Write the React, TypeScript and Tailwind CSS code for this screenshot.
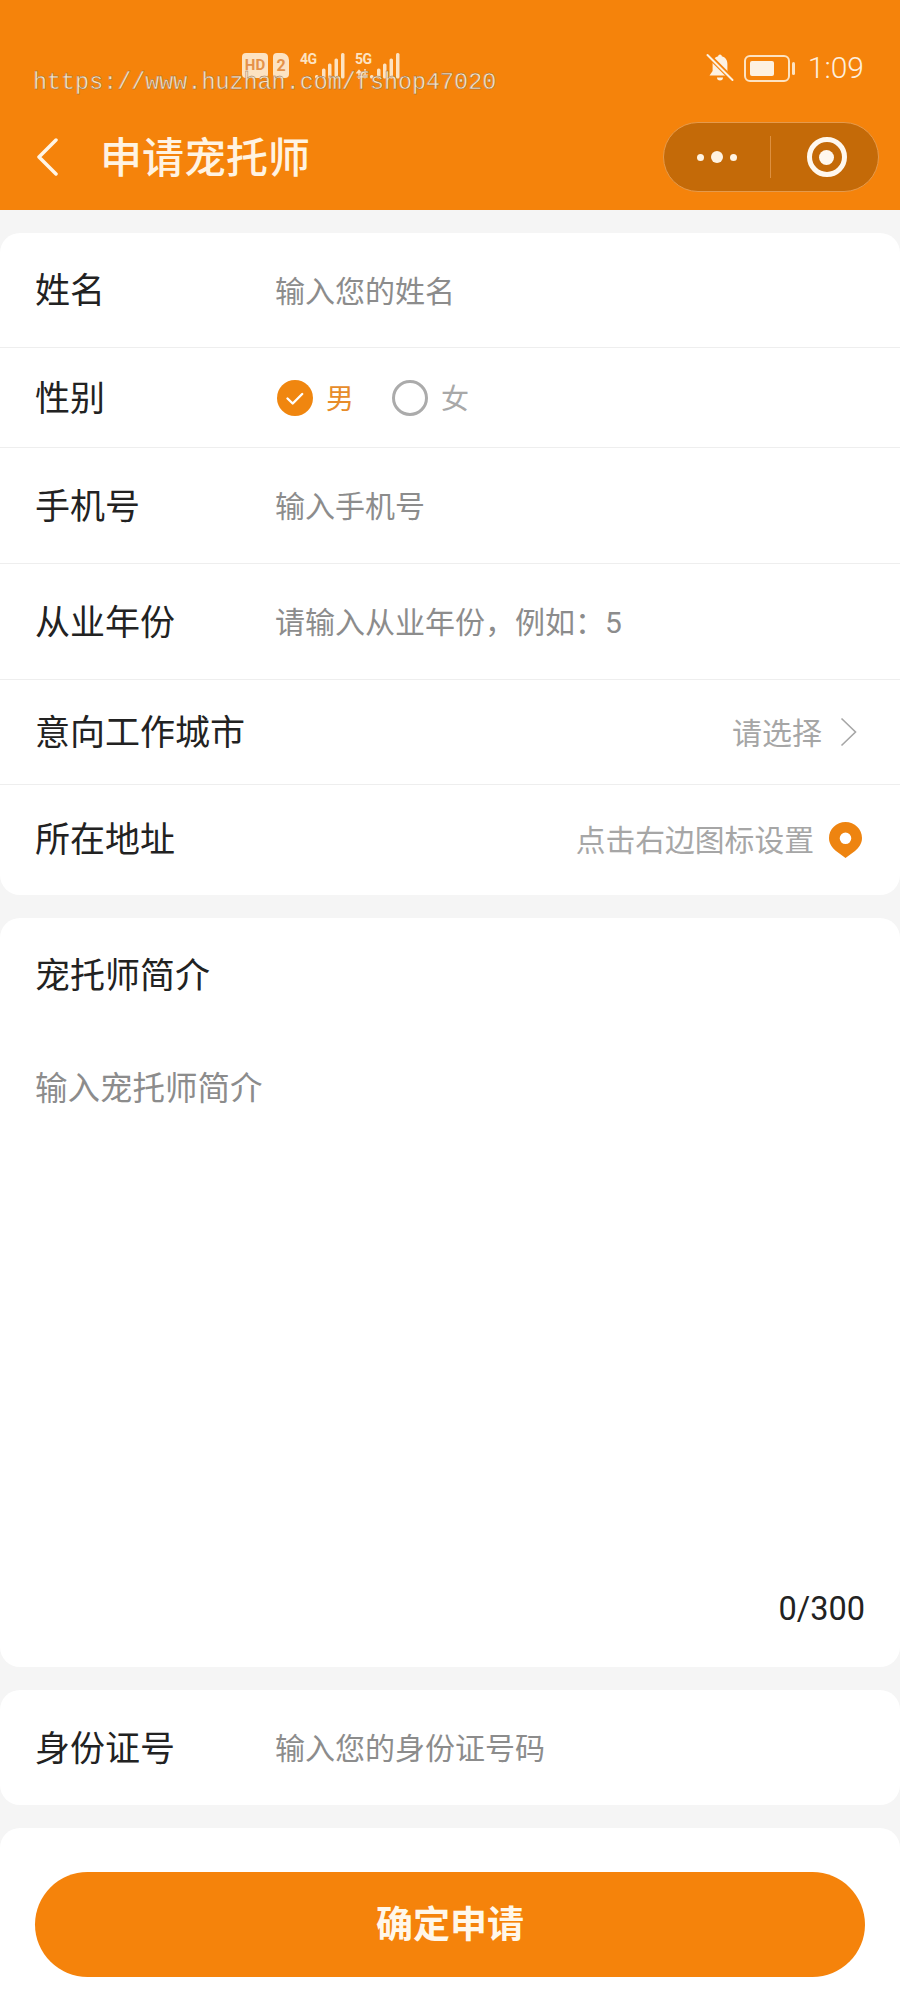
function Bars() {
  return (
    <svg width="30" height="26" viewBox="0 0 30 26" className="block">
      <rect x="0" y="22" width="3.500" height="3.500" rx="1.500" fill="#fde3c2" />
      <rect x="7" y="15.500" width="3.500" height="10" rx="1.500" fill="#fde3c2" />
      <rect x="13" y="10.500" width="3.500" height="15" rx="1.500" fill="#fde3c2" />
      <rect x="19.500" y="5.500" width="3.500" height="20" rx="1.500" fill="#fde3c2" />
      <rect x="26" y="0" width="3.500" height="25.500" rx="1.500" fill="#fde3c2" />
    </svg>
  );
}

function Signal({ name, arrows }: { name: string; arrows?: boolean }) {
  return (
    <div className="flex items-start w-[55px]">
      <div className="flex flex-col w-[15px]">
        <span className="text-[14px] leading-[13px] font-bold tracking-[-0.5px] text-[#fde3c2]">{name}</span>
        {arrows && (
          <svg width="14" height="10" viewBox="0 0 14 10" className="block mt-[3px]">
            <path d="M4 10V2M1.500 4.500L4 1.500l2.500 3M10 0v8M7.500 5.500l2.500 3 2.500-3" fill="none" stroke="#fde3c2" strokeWidth="1.500" />
          </svg>
        )}
      </div>
      <Bars />
    </div>
  );
}

function StatusBar() {
  return (
    <div className="flex items-start justify-between h-[122px] pt-[53px] pl-[242px] pr-[36px]">
      <div className="flex items-start">
        <span className="flex items-center justify-center w-[26px] h-[25px] rounded-[4px] bg-[#fde3c2] text-[#e5924a] text-[15px] leading-none font-bold">HD</span>
        <span className="flex items-center justify-center w-[16px] h-[25px] ml-[5px] rounded-[4px] rounded-tr-[7px] bg-[#fde3c2] text-[#e5924a] text-[16px] leading-none font-bold">2</span>
        <div className="flex ml-[11px]">
          <Signal name="4G" />
          <Signal name="5G" arrows />
        </div>
      </div>
      <div className="flex items-center h-[30px]">
        <svg width="28" height="30" viewBox="0 0 28 30" className="block">
          <path d="M14 1.500c-1 0-1.700.8-1.800 1.800C8.600 4.200 6.600 7 6.600 11v7L3.500 22.500h21L21.400 18v-7c0-4-2-6.800-5.600-7.700-.1-1-.8-1.800-1.800-1.800z" fill="#fdf1e2" />
          <path d="M11 24.500a3 3 0 0 0 6 0z" fill="#fdf1e2" />
          <path d="M2 2l24 24" stroke="#f5830b" strokeWidth="5" />
          <path d="M1.500 2l25 25" stroke="#fdf1e2" strokeWidth="2" strokeLinecap="round" />
        </svg>
        <div className="ml-[10px] flex items-center justify-start w-[46px] h-[27px] rounded-[6px] border-2 border-[#fde3c2] p-[4px]">
          <div className="w-[24px] h-full rounded-[2px] bg-[#fdf1e2]" />
        </div>
        <div className="ml-[2px] w-[3px] h-[13px] rounded-full bg-[#fde3c2]" />
        <span className="ml-[13px] text-[30px] leading-none text-[#fdeedd] font-light">1:09</span>
      </div>
    </div>
  );
}

function NavBar() {
  return (
    <div className="flex items-center justify-between h-[70px] pl-[37px] pr-[21px]">
      <div className="flex items-center">
        <svg width="21" height="38" viewBox="0 0 21 38" className="block">
          <path d="M19 2L2 19l17 17" fill="none" stroke="#fff5e6" strokeWidth="3.500" strokeLinecap="round" strokeLinejoin="round" />
        </svg>
        <span className="ml-[42px] pt-[4px] text-[42px] leading-none font-medium text-[#fff3e2]">申请宠托师</span>
      </div>
      <div className="flex items-center w-[216px] h-[70px] rounded-full bg-[#c46a08] border border-[#e59a4c]">
        <div className="flex items-center justify-center gap-[7px] w-[106px]">
          <span className="w-[7px] h-[7px] rounded-full bg-[#fff3e2]" />
          <span className="w-[12px] h-[12px] rounded-full bg-[#fff3e2]" />
          <span className="w-[7px] h-[7px] rounded-full bg-[#fff3e2]" />
        </div>
        <div className="w-px h-[42px] bg-[#dd9040]" />
        <div className="flex items-center justify-center flex-1 pl-[4px]">
          <div className="flex items-center justify-center w-[40px] h-[40px] rounded-full border-[5px] border-[#fff8ee]">
            <div className="w-[15px] h-[15px] rounded-full bg-[#fff8ee]" />
          </div>
        </div>
      </div>
    </div>
  );
}

function Row({ label, hint, h, border = true }: { label: string; hint: string; h: string; border?: boolean }) {
  return (
    <div className={`flex items-center pl-[35px] ${h} ${border ? "border-b border-[#eeeeee]" : ""}`}>
      <span className="w-[240px] pt-[3px] text-[35px] leading-none text-[#222222]">{label}</span>
      <span className="pt-[3px] text-[30px] leading-none text-[#8c8c8c]">{hint}</span>
    </div>
  );
}

export default function App() {
  return (
    <div className="relative w-[900px] h-[2000px] overflow-hidden bg-[#f5f5f5] font-['Roboto','Noto_Sans_CJK_SC',sans-serif]">
      <header className="h-[210px] bg-[#f5830b]">
        <StatusBar />
        <NavBar />
      </header>

      {/* watermark sits over the status bar */}
      <div className="absolute left-[33px] top-[69px] font-['Liberation_Mono',monospace] text-[23.4px] leading-[28px] text-[#f9e3c6] [-webkit-text-stroke:0.4px_#8a6a48]">
        https://www.huzhan.com/fshop47020
      </div>

      <main className="flex flex-col gap-[23px] pt-[23px]">
        <section className="bg-white rounded-[20px]">
          <Row label="姓名" hint="输入您的姓名" h="h-[115px]" />
          <div className="flex items-center h-[100px] pl-[35px] border-b border-[#eeeeee]">
            <span className="w-[242px] pt-[3px] text-[35px] leading-none text-[#222222]">性别</span>
            <svg width="36" height="36" viewBox="0 0 36 36" className="block">
              <circle cx="18" cy="18" r="18" fill="#f0860f" />
              <path d="M10.500 18.500l5.200 5 9.500-9.500" fill="none" stroke="#fff" strokeWidth="2.400" strokeLinecap="round" strokeLinejoin="round" />
            </svg>
            <span className="ml-[13px] pt-[4px] text-[28px] leading-none text-[#e78c2a]">男</span>
            <span className="ml-[38px] w-[36px] h-[36px] rounded-full border-[3px] border-[#ababab]" />
            <span className="ml-[13px] pt-[4px] text-[28px] leading-none text-[#a8a8a8]">女</span>
          </div>
          <Row label="手机号" hint="输入手机号" h="h-[116px]" />
          <Row label="从业年份" hint="请输入从业年份，例如：5" h="h-[116px]" />
          <div className="flex items-center justify-between h-[105px] pl-[35px] pr-[43px] border-b border-[#eeeeee]">
            <span className="pt-[2px] text-[35px] leading-none text-[#222222]">意向工作城市</span>
            <div className="flex items-center">
              <span className="pt-[3px] text-[30px] leading-none text-[#a6a6a6]">请选择</span>
              <svg width="17" height="30" viewBox="0 0 17 30" className="block ml-[18px]">
                <path d="M1.500 1.500L15.500 15 1.500 28.500" fill="none" stroke="#a6a6a6" strokeWidth="1.600" />
              </svg>
            </div>
          </div>
          <div className="flex items-center justify-between h-[110px] pl-[35px] pr-[38px]">
            <span className="text-[35px] leading-none text-[#222222]">所在地址</span>
            <div className="flex items-center">
              <span className="pt-[2px] text-[29.8px] leading-none text-[#a6a6a6]">点击右边图标设置</span>
              <svg width="33" height="36" viewBox="0 0 33 36" className="block ml-[15px]">
                <path fillRule="evenodd" d="M16.500 0C7.400 0 0 7.200 0 16c0 6 3.400 9.600 7 13l9.500 7 9.500-7c3.600-3.400 7-7 7-13C33 7.200 25.600 0 16.500 0zm0 10.500a5.800 5.800 0 1 1 0 11.600 5.800 5.800 0 0 1 0-11.600z" fill="#ee8410" />
              </svg>
            </div>
          </div>
        </section>

        <section className="flex flex-col h-[749px] pl-[35px] pr-[35px] bg-white rounded-[20px]">
          <h2 className="mt-[41px] text-[35px] leading-[36px] font-normal text-[#222222]">宠托师简介</h2>
          <p className="mt-[76px] text-[32.5px] leading-[36px] text-[#8c8c8c]">输入宠托师简介</p>
          <div className="mt-auto mb-[40px] text-right text-[32.5px] leading-[36px] text-[#222222]">0/300</div>
        </section>

        <section className="bg-white rounded-[20px]">
          <Row label="身份证号" hint="输入您的身份证号码" h="h-[115px]" border={false} />
        </section>

        <section className="h-[172px] px-[35px] pt-[44px] bg-white rounded-t-[20px]">
          <button className="flex items-center justify-center w-full h-[105px] pt-[2px] rounded-full bg-[#f5830b] text-[37px] leading-none font-bold text-[#fff7ea]">
            确定申请
          </button>
        </section>
      </main>
    </div>
  );
}
